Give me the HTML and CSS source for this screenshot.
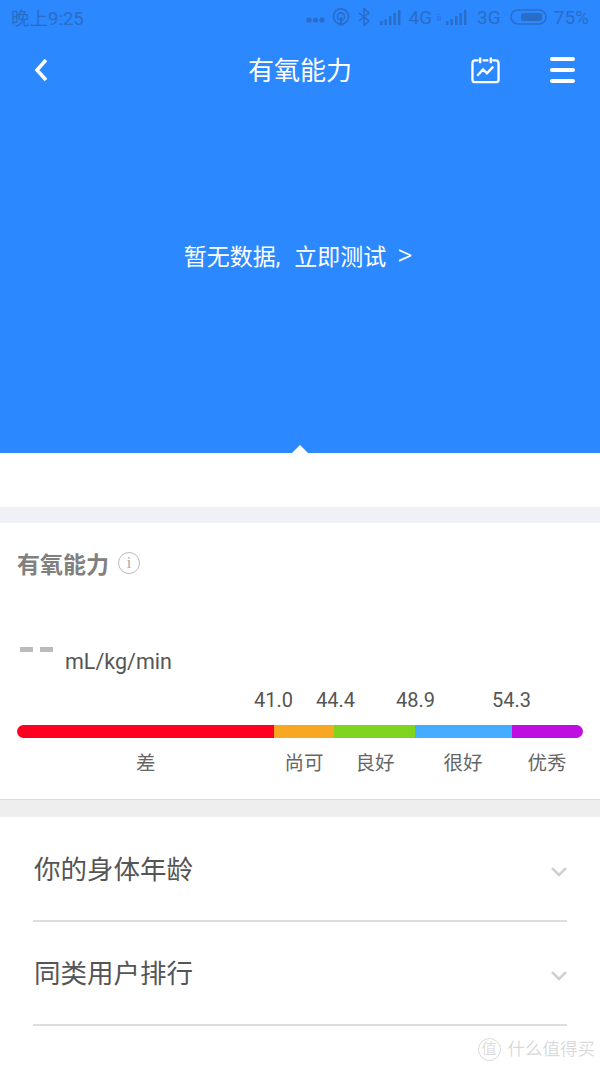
FILE: index.html
```html
<!DOCTYPE html>
<html lang="zh-CN">
<head>
    <meta charset="UTF-8">
    <meta name="viewport" content="width=device-width, initial-scale=1.0">
    <title>有氧能力</title>
    <link rel="stylesheet" href="styles.css">
</head>
<body>
    <header class="hero">
        <div class="status-bar">
            <span class="status-time">晚上9:25</span>
            <div class="status-icons">
                <svg class="status-dots" width="19" height="6" viewBox="0 0 19 6"><circle cx="3" cy="3" r="2.600"/><circle cx="9.500" cy="3" r="2.600"/><circle cx="16" cy="3" r="2.600"/></svg>
                <svg class="status-line status-cast" width="18" height="18" viewBox="0 0 18 18"><circle cx="9" cy="8.500" r="7.600"/><circle cx="9" cy="8.500" r="3.600"/><path d="M9 9v7.500M6.500 16.500h5" stroke-width="2.200"/></svg>
                <svg class="status-line status-bt" width="12" height="18" viewBox="0 0 12 18"><path d="M1 5l10 8-5 4.500V.5l5 4.500-10 8"/></svg>
                <svg class="status-signal" width="21" height="15" viewBox="0 0 21 15"><rect x="0" y="11" width="2.400" height="4"/><rect x="4.500" y="9" width="2.400" height="6"/><rect x="9" y="6" width="2.400" height="9"/><rect x="13.500" y="3" width="2.400" height="12"/><rect x="18" y="0" width="2.400" height="15"/></svg>
                <span class="status-net">4G</span>
                <span class="status-mini">ⅱ</span>
                <svg class="status-signal" width="21" height="15" viewBox="0 0 21 15"><rect x="0" y="11" width="2.400" height="4"/><rect x="4.500" y="9" width="2.400" height="6"/><rect x="9" y="6" width="2.400" height="9"/><rect x="13.500" y="3" width="2.400" height="12"/><rect x="18" y="0" width="2.400" height="15"/></svg>
                <span class="status-net net-gap">3G</span>
                <svg class="status-battery" width="37" height="16" viewBox="0 0 37 16"><rect class="battery-shell" x="1" y="1" width="35" height="14" rx="7"/><rect x="11" y="4" width="21" height="8" rx="2"/></svg>
                <span class="status-net">75%</span>
            </div>
        </div>

        <nav class="nav-bar">
            <svg class="nav-back" width="14" height="24" viewBox="0 0 14 24"><path d="M12 2L3 12l9 10"/></svg>
            <h1 class="nav-title">有氧能力</h1>
            <svg class="nav-calendar" width="29" height="28" viewBox="0 0 30 28"><path d="M8 4H4.500Q1.500 4 1.500 7v17q0 2.500 2.500 2.500h22q2.500 0 2.500-2.500V7q0-3-3-3H22M12 4h6M9.500 1v6M20.500 1v6M6.500 20l6-6.500 4 4 6.500-7"/></svg>
            <div class="nav-menu"><span></span><span></span><span></span></div>
        </nav>

        <div class="hero-message">暂无数据<span class="hero-comma">,</span>立即测试<span class="hero-arrow">&gt;</span></div>
        <div class="hero-notch"></div>
    </header>

    <div class="spacer"></div>

    <section class="score-card">
        <h2 class="score-title">有氧能力<span class="info-icon">i</span></h2>
        <div class="score-value">
            <span class="dashes"><i></i><i></i></span>
            <span class="unit">mL/kg/min</span>
        </div>
        <div class="scale-values">
            <span class="val-1">41.0</span>
            <span class="val-2">44.4</span>
            <span class="val-3">48.9</span>
            <span class="val-4">54.3</span>
        </div>
        <div class="scale-bar">
            <div class="seg seg-red"></div>
            <div class="seg seg-orange"></div>
            <div class="seg seg-green"></div>
            <div class="seg seg-blue"></div>
            <div class="seg seg-purple"></div>
        </div>
        <div class="scale-labels">
            <span class="lab-1">差</span>
            <span class="lab-2">尚可</span>
            <span class="lab-3">良好</span>
            <span class="lab-4">很好</span>
            <span class="lab-5">优秀</span>
        </div>
    </section>

    <section class="fold-list">
        <div class="fold-row">
            <span class="fold-text">你的身体年龄</span>
            <svg class="chevron" width="18" height="11" viewBox="0 0 18 11"><path d="M2 2l7 7 7-7"/></svg>
        </div>
        <div class="fold-row">
            <span class="fold-text">同类用户排行</span>
            <svg class="chevron" width="18" height="11" viewBox="0 0 18 11"><path d="M2 2l7 7 7-7"/></svg>
        </div>
    </section>

    <!-- Watermark -->
    <div class="watermark"><span class="watermark-badge">值</span>什么值得买</div>
</body>
</html>
```

FILE: styles.css
```css
/* General Styles */
* {
    box-sizing: border-box;
}

html, body {
    margin: 0;
    height: 1067px;
    overflow: hidden;
}

body {
    position: relative;
    background: #fff;
    font-family: Roboto, "Noto Sans CJK SC", sans-serif;
    color: #555;
}

/* Blue hero */
.hero {
    position: relative;
    height: 453px;
    background: #2b88ff;
    color: #fff;
}

/* Status bar */
.status-bar {
    display: flex;
    justify-content: space-between;
    align-items: center;
    height: 34px;
    margin-bottom: 1px;
    padding: 0 11px;
    color: #2a6dc6;
    font-size: 18.500px;
}

.status-icons {
    display: flex;
    align-items: center;
    font-size: 19px;
}

.status-icons svg {
    fill: #2a6dc6;
}

.status-icons .status-line {
    fill: none;
    stroke: #2a6dc6;
    stroke-width: 1.600;
}

.status-dots {
    margin-top: 5px;
    margin-right: 7px;
}

.status-cast {
    margin-right: 8px;
}

.status-bt {
    margin-right: 10px;
}

.status-signal {
    margin-right: 7px;
}

.status-mini {
    width: 5px;
    margin: 0 6px 0 3px;
    font-size: 8px;
}

.net-gap {
    margin-left: 3px;
    margin-right: 9px;
}

.status-battery {
    margin-right: 7px;
}

.battery-shell {
    fill: none;
    stroke: #2a6dc6;
    stroke-width: 1.600;
}

/* Nav bar */
.nav-bar {
    position: relative;
    display: flex;
    align-items: center;
    height: 70px;
    padding: 0 25px 0 34px;
}

.nav-back {
    fill: none;
    stroke: #fff;
    stroke-width: 3.500;
}

.nav-title {
    position: absolute;
    left: 0;
    right: 0;
    margin: -4px 0 0;
    text-align: center;
    font-size: 26px;
    font-weight: 400;
}

.nav-calendar {
    margin-left: auto;
    fill: none;
    stroke: #fff;
    stroke-width: 2.400;
}

.nav-menu {
    display: flex;
    flex-direction: column;
    gap: 7.500px;
    width: 25px;
    margin-left: 50px;
}

.nav-menu span {
    display: block;
    height: 3.500px;
    border-radius: 2px;
    background: #fff;
}

.hero-message {
    margin-top: 134px;
    padding-right: 4px;
    text-align: center;
    font-size: 23px;
    line-height: 38px;
}

.hero-comma {
    margin-right: 14px;
}

.hero-arrow {
    margin-left: 11px;
    font-size: 29px;
    font-weight: 300;
    line-height: 30px;
}

.hero-notch {
    position: absolute;
    left: 292px;
    bottom: 0;
    width: 0;
    height: 0;
    border-left: 8px solid transparent;
    border-right: 8px solid transparent;
    border-bottom: 8px solid #fff;
}

.spacer {
    height: 54px;
}

/* Score card */
.score-card {
    height: 293px;
    padding: 16px 17px 0;
    background: #fff;
    border-top: 16px solid #f0f1f6;
    border-bottom: 1px solid #dcdcdc;
}

.score-title {
    display: flex;
    align-items: center;
    gap: 9px;
    height: 50px;
    margin: -1px 0 0;
    font-size: 23px;
    font-weight: 700;
    color: #808080;
}

.info-icon {
    display: flex;
    align-items: center;
    justify-content: center;
    width: 22px;
    height: 22px;
    border: 1.500px solid #bbb;
    border-radius: 50%;
    font-family: "Liberation Serif", serif;
    font-size: 16px;
    font-weight: 400;
    color: #aaa;
}

.score-value {
    display: flex;
    align-items: flex-start;
    height: 50px;
    margin-top: 44px;
}

.dashes {
    display: flex;
    gap: 7px;
    margin: 15px 0 0 3px;
}

.dashes i {
    display: block;
    width: 13px;
    height: 5px;
    background: #bbb;
}

.unit {
    margin: 16px 0 0 12px;
    font-size: 21.500px;
    line-height: 27px;
    color: #555;
}

.scale-values {
    display: flex;
    height: 26px;
    margin-top: 5px;
    font-size: 20px;
    line-height: 26px;
    color: #555;
}

.val-1 { margin-left: 237px; }
.val-2 { margin-left: 23px; }
.val-3 { margin-left: 41px; }
.val-4 { margin-left: 57px; }

.scale-bar {
    display: flex;
    height: 13px;
    margin-top: 12px;
    border-radius: 7px;
    overflow: hidden;
}

.seg-red { width: 257px; background: #ff0022; }
.seg-orange { width: 60px; background: #f8a723; }
.seg-green { width: 81px; background: #80d41d; }
.seg-blue { width: 97px; background: #45adff; }
.seg-purple { width: 71px; background: #bf0fe0; }

.scale-labels {
    display: flex;
    margin-top: 13px;
    font-size: 19.500px;
    line-height: 26px;
    color: #666;
}

.lab-1 { margin-left: 119px; }
.lab-2 { margin-left: 129px; }
.lab-3 { margin-left: 32px; }
.lab-4 { margin-left: 49px; }
.lab-5 { margin-left: 45px; }

/* Collapsible rows */
.fold-list {
    padding: 1px 33px 0;
    border-top: 17px solid #eee;
}

.fold-row {
    display: flex;
    justify-content: space-between;
    align-items: center;
    height: 104px;
    font-size: 26.500px;
    color: #555;
    border-bottom: 2px solid #ddd;
}

.fold-text {
    margin: -3px 0 0 1px;
}

.chevron {
    margin: 4px -1px 0 0;
    fill: none;
    stroke: #d0d0d0;
    stroke-width: 2.500;
}

/* Watermark */
.watermark {
    position: absolute;
    right: 5px;
    bottom: 0;
    display: flex;
    align-items: center;
    font-size: 17.500px;
    line-height: 36px;
    color: rgba(120, 120, 120, 0.28);
}

.watermark-badge {
    display: flex;
    align-items: center;
    justify-content: center;
    width: 23px;
    height: 23px;
    margin-right: 7px;
    border: 1.500px solid rgba(120, 120, 120, 0.28);
    border-radius: 50%;
    font-size: 15px;
}
```
